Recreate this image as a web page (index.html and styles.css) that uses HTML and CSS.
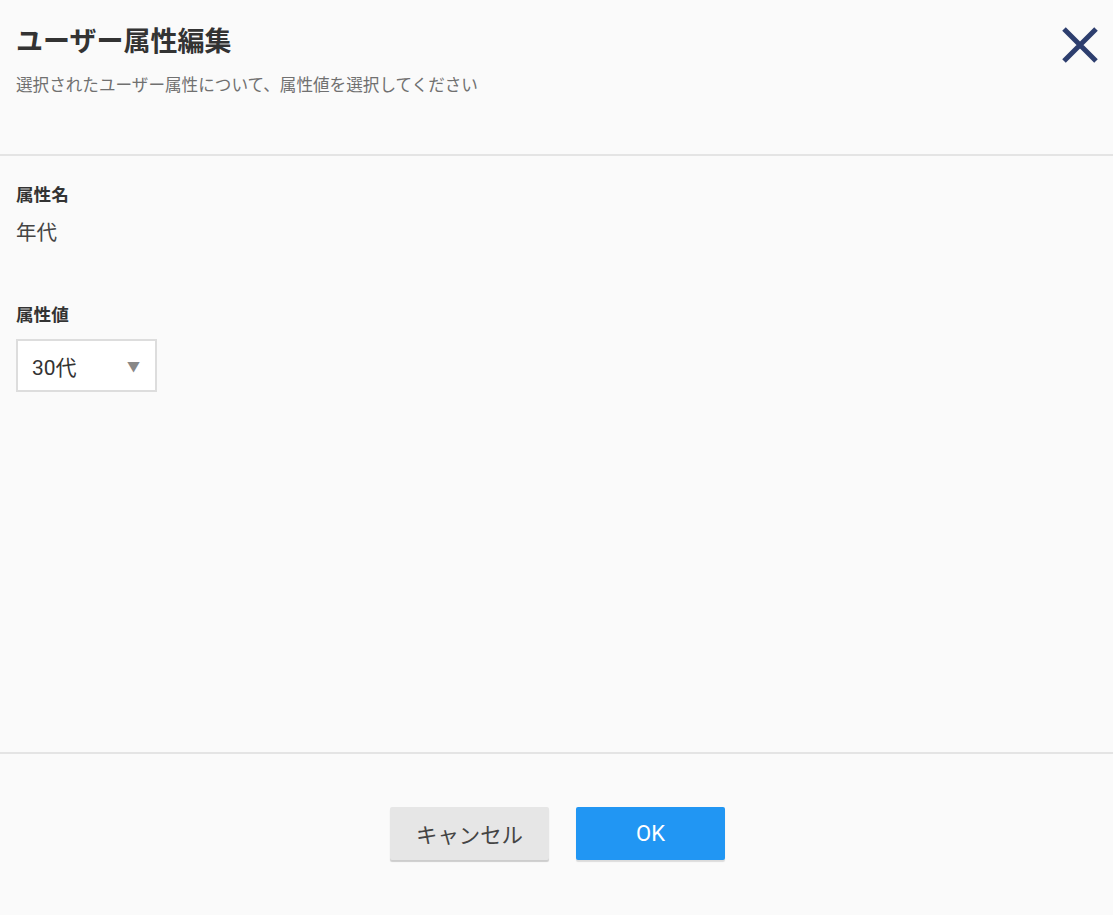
FILE: index.html
```html
<!DOCTYPE html>
<html lang="ja">
<head>
    <meta charset="UTF-8">
    <title>ユーザー属性編集</title>
    <link rel="stylesheet" href="styles.css">
</head>
<body>
    <div class="dialog">
        <header class="dialog-header">
            <div class="header-text">
                <h1>ユーザー属性編集</h1>
                <p class="lead">選択されたユーザー属性について、属性値を選択してください</p>
            </div>
            <button class="close-btn" aria-label="閉じる">
                <svg width="36" height="36" viewBox="0 0 36 36">
                    <path d="M2 2 L34 34 M34 2 L2 34" stroke="#2d3e6e" stroke-width="5" fill="none"/>
                </svg>
            </button>
        </header>

        <main class="dialog-body">
            <div class="field">
                <div class="field-label">属性名</div>
                <div class="field-value">年代</div>
            </div>
            <div class="field">
                <div class="field-label">属性値</div>
                <div class="select-box">
                    <span>30代</span>
                    <span class="arrow">▼</span>
                </div>
            </div>
        </main>

        <footer class="dialog-footer">
            <button class="btn btn-cancel">キャンセル</button>
            <button class="btn btn-ok">OK</button>
        </footer>
    </div>
</body>
</html>
```

FILE: styles.css
```css
/* General */
html, body {
    margin: 0;
    padding: 0;
    height: 100%;
}

body {
    background: #fafafa;
    color: #333;
    font-family: 'Roboto', 'Noto Sans CJK JP', sans-serif;
}

.dialog {
    display: flex;
    flex-direction: column;
    height: 100vh;
}

/* Header */
.dialog-header {
    display: flex;
    justify-content: space-between;
    align-items: flex-start;
    height: 154px;
    padding: 0 15px 0 16px;
    border-bottom: 2px solid #e4e4e4;
    box-sizing: content-box;
}

.dialog-header h1 {
    margin: 22px 0 0;
    font-size: 27px;
    font-weight: 700;
    line-height: 40px;
    color: #333;
}

.lead {
    margin: 12px 0 0;
    font-size: 16.6px;
    line-height: 24px;
    color: #707070;
}

.close-btn {
    margin-top: 27px;
    padding: 0;
    border: none;
    background: none;
    cursor: pointer;
    line-height: 0;
}

/* Body */
.dialog-body {
    flex: 1;
    padding: 26px 16px 0;
}

.field {
    margin-bottom: 54px;
}

.field-label {
    font-size: 17.6px;
    font-weight: 700;
    line-height: 26px;
    color: #333;
}

.field-value {
    margin-top: 10px;
    font-size: 20.5px;
    line-height: 30px;
    color: #444;
}

.field .select-box {
    margin-top: 11px;
}

.select-box {
    display: flex;
    justify-content: space-between;
    align-items: center;
    width: 141px;
    height: 53px;
    padding: 0 15px 0 14px;
    border: 2px solid #ddd;
    background: #fff;
    box-sizing: border-box;
    font-size: 21px;
    color: #333;
}

.select-box .arrow {
    font-size: 13px;
    color: #888;
}

/* Footer */
.dialog-footer {
    display: flex;
    justify-content: center;
    align-items: center;
    gap: 27px;
    height: 159px;
    padding: 0 0 2px 2px;
    border-top: 2px solid #e4e4e4;
}

.btn {
    height: 53px;
    border: none;
    border-radius: 2px;
    font-family: 'Roboto', 'Noto Sans CJK JP', sans-serif;
    font-size: 21.4px;
    cursor: pointer;
}

.btn-cancel {
    width: 159px;
    background: #e6e6e6;
    color: #444;
    box-shadow: 0 2px 1px rgba(0, 0, 0, 0.18);
}

.btn-ok {
    width: 149px;
    background: #2196f3;
    color: #fff;
    font-size: 22px;
    box-shadow: 0 2px 1px rgba(0, 0, 0, 0.12);
}
```
